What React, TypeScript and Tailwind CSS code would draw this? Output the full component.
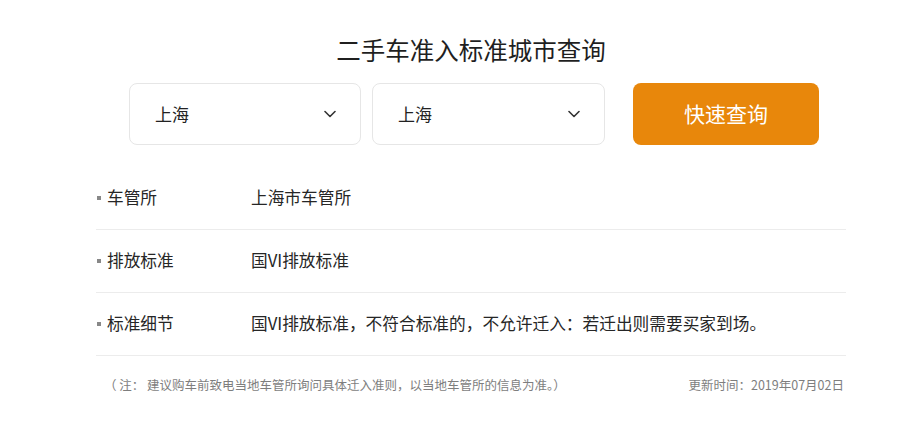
import React from "react";

const Chevron = () => (
  <svg width="12" height="8" viewBox="0 0 12 8" fill="none">
    <path d="M1 1.5 L6 6.5 L11 1.5" stroke="#333" strokeWidth="1.6" strokeLinecap="round" strokeLinejoin="round" />
  </svg>
);

const Select = ({ w }: { w: string }) => (
  <div className={`${w} h-[62px] rounded-[8px] border border-[#e6e6e6] bg-white flex items-center justify-between pl-[25px] pr-[24px]`}>
    <span className="text-[17px] text-[#222]">上海</span>
    <Chevron />
  </div>
);

const rows = [
  { k: "车管所", v: "上海市车管所" },
  { k: "排放标准", v: "国VI排放标准" },
  { k: "标准细节", v: "国VI排放标准，不符合标准的，不允许迁入：若迁出则需要买家到场。" },
];

export default function App() {
  return (
    <div className="w-[900px] h-[421px] bg-white font-['Noto_Sans_CJK_SC','Noto_Sans',sans-serif] overflow-hidden">
      <div className="ml-[96px] w-[750px] flex flex-col">
        <h1 className="mt-[34px] text-center text-[24.5px] leading-[32px] text-[#1f1f1f] font-normal">
          二手车准入标准城市查询
        </h1>
        <div className="mt-[17px] pl-[33px] flex items-center">
          <Select w="w-[232px]" />
          <div className="w-[11px]" />
          <Select w="w-[233px]" />
          <div className="w-[28px]" />
          <button className="w-[186px] h-[62px] rounded-[8px] bg-[#e8870b] text-white text-[21px]">
            快速查询
          </button>
        </div>
        <div className="mt-[22px] flex flex-col">
          {rows.map((r) => (
            <div key={r.k} className="h-[63px] border-b border-[#ececec] flex items-center text-[16.7px] text-[#262626]">
              <div className="w-[155px] flex items-center">
                <span className="ml-[1px] w-[4px] h-[4px] bg-[#888]" />
                <span className="ml-[6px]">{r.k}</span>
              </div>
              <span>{r.v}</span>
            </div>
          ))}
        </div>
        <div className="mt-[21px] flex justify-between text-[12.5px] leading-[16px] text-[#7e7e7e]">
          <span className="ml-[8px]">（ 注： 建议购车前致电当地车管所询问具体迁入准则，以当地车管所的信息为准。）</span>
          <span className="mr-[2px]">更新时间：2019年07月02日</span>
        </div>
      </div>
    </div>
  );
}
